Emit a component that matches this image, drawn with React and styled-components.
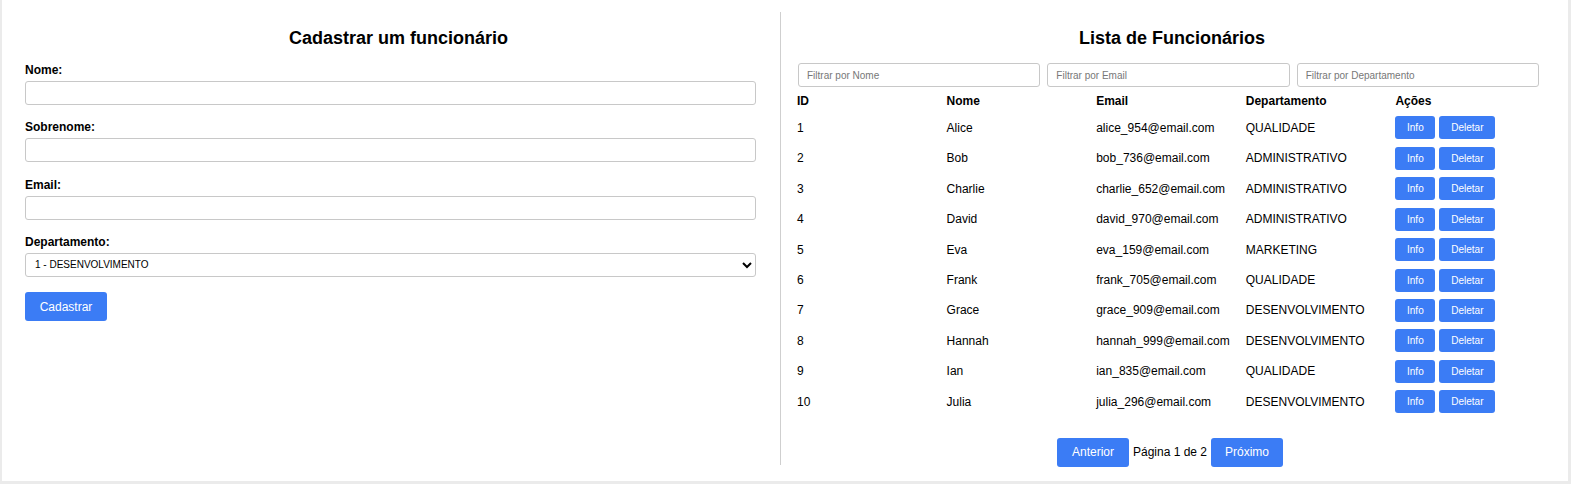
import React from "react";
import styled, { createGlobalStyle } from "styled-components";

const GlobalStyle = createGlobalStyle`
  html, body {
    margin: 0;
    padding: 0;
    background: #ebebeb;
    font-family: "Liberation Sans", Arial, sans-serif;
    color: #000;
  }
  * {
    box-sizing: border-box;
  }
`;

const Page = styled.div`
  display: flex;
  height: 481px;
  margin: 0 3px 0 2px;
  padding: 12px 17px 16px 11px;
  background: #fff;
`;

const FormPanel = styled.section`
  width: 767px;
  flex-shrink: 0;
  padding: 0 8px 0 12px;
`;

const Form = styled.form`
  padding-right: 16px;
`;

const ListPanel = styled.section`
  flex: 1;
  padding: 0 0 0 12px;
  border-left: 1px solid #cfcfcf;
`;

const Title = styled.h2`
  margin: 16px 0 14px;
  font-size: 18px;
  line-height: 21px;
  font-weight: bold;
  text-align: center;
`;

const Field = styled.div`
  display: flex;
  flex-direction: column;
  margin-bottom: 15.3px;
`;

const Label = styled.label`
  font-size: 12px;
  line-height: 14px;
  font-weight: bold;
  margin-bottom: 4px;
`;

const TextInput = styled.input`
  height: 24px;
  width: 100%;
  min-width: 0;
  padding: 0 8px;
  border: 1px solid #c8c8c8;
  border-radius: 3px;
  font-family: inherit;
  font-size: ${props => (props.small ? "10px" : "12px")};
  background: #fff;
  outline: none;

  &::placeholder {
    color: #777;
  }
`;

const Select = styled.select`
  height: 24px;
  width: 100%;
  padding: 0 6px 0 5px;
  border: 1px solid #c8c8c8;
  border-radius: 3px;
  font-family: inherit;
  font-size: 10px;
  color: #000;
  background: #fff;
`;

const Button = styled.button`
  height: ${props => (props.small ? "23px" : "29px")};
  width: ${props => (props.w ? `${props.w}px` : "auto")};
  padding: 0;
  border: none;
  border-radius: 3px;
  background: #3b7cf5;
  color: #fff;
  font-family: inherit;
  font-size: ${props => (props.small ? "10px" : "12px")};
  cursor: pointer;
`;

const Filters = styled.div`
  display: flex;
  gap: 7px;
  padding: 0 12px 0 5px;
`;

const Table = styled.table`
  width: calc(100% - 10px);
  table-layout: fixed;
  border-collapse: collapse;
  margin-top: 2px;
  font-size: 12px;
`;

const HeadCell = styled.th`
  height: 23.6px;
  padding: 0 4px;
  text-align: left;
  font-weight: bold;
`;

const Cell = styled.td`
  height: 30.44px;
  padding: 0 4px;
  white-space: nowrap;
`;

const Actions = styled.div`
  display: flex;
  gap: 4px;
`;

const Pagination = styled.div`
  display: flex;
  justify-content: center;
  align-items: center;
  gap: 4px;
  margin-top: 21px;
  padding-right: 4px;
  font-size: 12px;
`;

const employees = [
  { id: 1, name: "Alice", email: "alice_954@email.com", dept: "QUALIDADE" },
  { id: 2, name: "Bob", email: "bob_736@email.com", dept: "ADMINISTRATIVO" },
  { id: 3, name: "Charlie", email: "charlie_652@email.com", dept: "ADMINISTRATIVO" },
  { id: 4, name: "David", email: "david_970@email.com", dept: "ADMINISTRATIVO" },
  { id: 5, name: "Eva", email: "eva_159@email.com", dept: "MARKETING" },
  { id: 6, name: "Frank", email: "frank_705@email.com", dept: "QUALIDADE" },
  { id: 7, name: "Grace", email: "grace_909@email.com", dept: "DESENVOLVIMENTO" },
  { id: 8, name: "Hannah", email: "hannah_999@email.com", dept: "DESENVOLVIMENTO" },
  { id: 9, name: "Ian", email: "ian_835@email.com", dept: "QUALIDADE" },
  { id: 10, name: "Julia", email: "julia_296@email.com", dept: "DESENVOLVIMENTO" },
];

function EmployeeForm() {
  return (
    <FormPanel>
      <Title>Cadastrar um funcionário</Title>
      <Form onSubmit={e => e.preventDefault()}>
        <Field>
          <Label>Nome:</Label>
          <TextInput type="text" />
        </Field>
        <Field>
          <Label>Sobrenome:</Label>
          <TextInput type="text" />
        </Field>
        <Field>
          <Label>Email:</Label>
          <TextInput type="email" />
        </Field>
        <Field>
          <Label>Departamento:</Label>
          <Select defaultValue="1">
            <option value="1">1 - DESENVOLVIMENTO</option>
            <option value="2">2 - ADMINISTRATIVO</option>
            <option value="3">3 - QUALIDADE</option>
            <option value="4">4 - MARKETING</option>
          </Select>
        </Field>
        <Button w={82}>Cadastrar</Button>
      </Form>
    </FormPanel>
  );
}

function EmployeeList() {
  return (
    <ListPanel>
      <Title>Lista de Funcionários</Title>
      <Filters>
        <TextInput small placeholder="Filtrar por Nome" />
        <TextInput small placeholder="Filtrar por Email" />
        <TextInput small placeholder="Filtrar por Departamento" />
      </Filters>
      <Table>
        <thead>
          <tr>
            <HeadCell>ID</HeadCell>
            <HeadCell>Nome</HeadCell>
            <HeadCell>Email</HeadCell>
            <HeadCell>Departamento</HeadCell>
            <HeadCell>Ações</HeadCell>
          </tr>
        </thead>
        <tbody>
          {employees.map(emp => (
            <tr key={emp.id}>
              <Cell>{emp.id}</Cell>
              <Cell>{emp.name}</Cell>
              <Cell>{emp.email}</Cell>
              <Cell>{emp.dept}</Cell>
              <Cell>
                <Actions>
                  <Button small w={40}>Info</Button>
                  <Button small w={56}>Deletar</Button>
                </Actions>
              </Cell>
            </tr>
          ))}
        </tbody>
      </Table>
      <Pagination>
        <Button w={72}>Anterior</Button>
        <span>Página 1 de 2</span>
        <Button w={72}>Próximo</Button>
      </Pagination>
    </ListPanel>
  );
}

export default function App() {
  return (
    <>
      <GlobalStyle />
      <Page>
        <EmployeeForm />
        <EmployeeList />
      </Page>
    </>
  );
}
